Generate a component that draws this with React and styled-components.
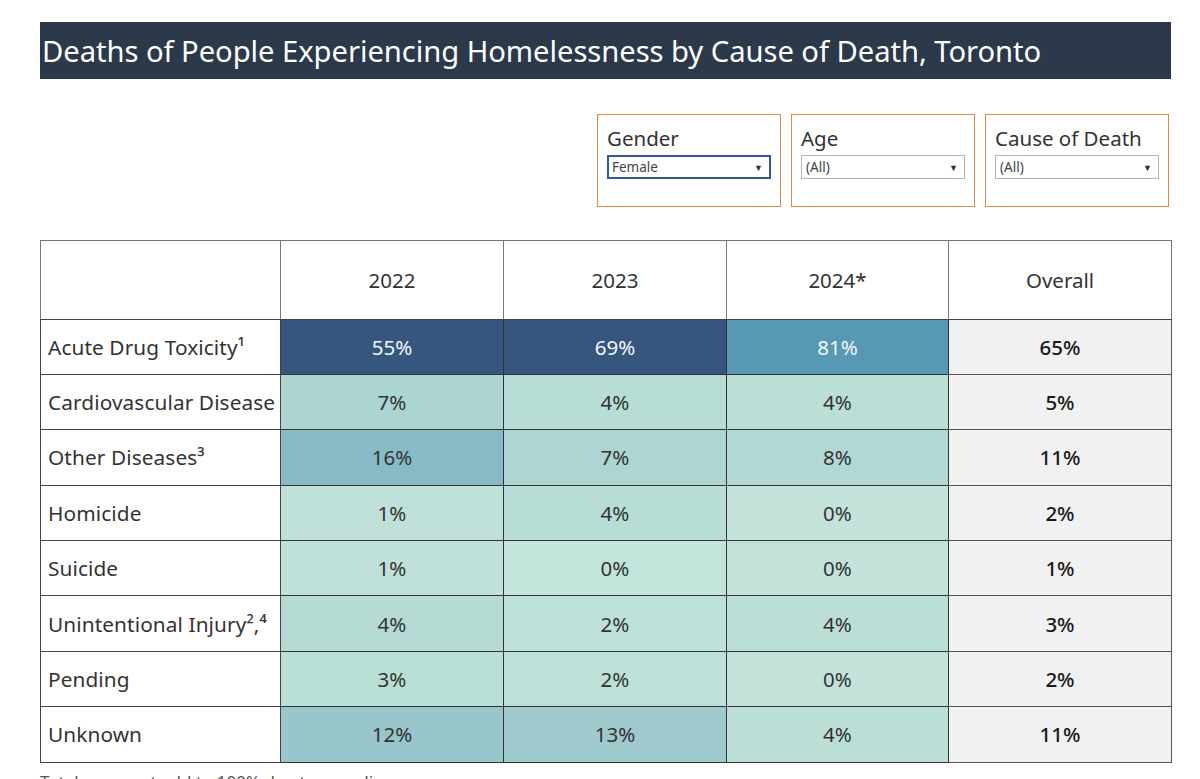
import React from "react";
import styled, { createGlobalStyle } from "styled-components";

const GlobalStyle = createGlobalStyle`
    html, body {
        margin: 0;
        padding: 0;
        background: #ffffff;
        font-family: "Noto Sans", "Open Sans", sans-serif;
        height: 779px;
        overflow: hidden;
    }
`;

const Page = styled.div`
    width: 1131px;
    padding: 22px 0 0 40px;
`;

const TitleBar = styled.header`
    background: #2b394b;
    height: 57px;
    display: flex;
    align-items: center;
    padding-left: 2px;

    h1 {
        margin: 0;
        color: #ffffff;
        font-size: 29.2px;
        font-weight: 400;
        letter-spacing: -0.05px;
    }
`;

const FilterRow = styled.div`
    display: flex;
    justify-content: flex-end;
    gap: 10px;
    margin-top: 35px;
    padding-right: 2px;
`;

const FilterBox = styled.div`
    width: 184px;
    height: 93px;
    border: 1.5px solid #e08b40;
    padding: 10px 9px 0 9px;
    box-sizing: border-box;

    label {
        display: block;
        font-size: 20.5px;
        color: #333;
        line-height: 26px;
        margin-bottom: 4px;
    }
`;

const Select = styled.div`
    height: 24px;
    box-sizing: border-box;
    border: ${({ focused }) => (focused ? "2px solid #2d5a96" : "1px solid #b4b4b4")};
    display: flex;
    align-items: center;
    justify-content: space-between;
    padding: 0 6px 0 ${({ focused }) => (focused ? "3px" : "4px")};
    font-size: 13.5px;
    color: #444;

    span.arrow {
        font-size: 9px;
        color: #333;
    }
`;

const Table = styled.table`
    margin-top: 33px;
    border-collapse: collapse;
    width: 1131px;
    table-layout: fixed;
    color: #333;
`;

const HeadCell = styled.th`
    height: 75.5px;
    border: 1px solid #777;
    border-bottom: 1.5px solid #444;
    font-size: 20.5px;
    font-weight: 400;
    text-align: center;
    color: #333;
`;

const LabelCell = styled.td`
    height: 54.4px;
    border: 1px solid #444;
    font-size: 20.8px;
    padding: 0 0 0 7px;
    white-space: nowrap;
    overflow: hidden;
    color: #333;
    letter-spacing: 0.1px;
`;

const ValueCell = styled.td`
    border: 1px solid #333;
    background: ${({ bg }) => bg};
    color: ${({ dark }) => (dark ? "#f4f7fa" : "#333")};
    font-size: 20.5px;
    text-align: center;
`;

const TotalCell = styled.td`
    border: 1px solid #555;
    background: #f1f1f1;
    color: #1a1a1a;
    font-size: 20.5px;
    font-weight: 500;
    text-align: center;
`;

const Footnote = styled.p`
    margin: 7px 0 0 0;
    font-size: 17px;
    color: #555;
`;

const rows = [
    { label: "Acute Drug Toxicity¹", cells: [["55%", "#36567f", 1], ["69%", "#36567f", 1], ["81%", "#5799b3", 1]], total: "65%" },
    { label: "Cardiovascular Disease", cells: [["7%", "#acd5d1"], ["4%", "#b8dcd6"], ["4%", "#bbdfd7"]], total: "5%" },
    { label: "Other Diseases³", cells: [["16%", "#88bbc6"], ["7%", "#add5d1"], ["8%", "#b1d8d2"]], total: "11%" },
    { label: "Homicide", cells: [["1%", "#bfe1d9"], ["4%", "#b8dcd6"], ["0%", "#c3e3da"]], total: "2%" },
    { label: "Suicide", cells: [["1%", "#bfe1d9"], ["0%", "#c3e4da"], ["0%", "#c3e3da"]], total: "1%" },
    { label: "Unintentional Injury²,⁴", cells: [["4%", "#b6dbd5"], ["2%", "#bde0d8"], ["4%", "#bbdfd7"]], total: "3%" },
    { label: "Pending", cells: [["3%", "#badfd7"], ["2%", "#bde0d8"], ["0%", "#c3e3da"]], total: "2%" },
    { label: "Unknown", cells: [["12%", "#98c6cb"], ["13%", "#9fcacd"], ["4%", "#bbdfd7"]], total: "11%" },
];

const filters = [
    { name: "Gender", value: "Female", focused: true },
    { name: "Age", value: "(All)" },
    { name: "Cause of Death", value: "(All)" },
];

const App = () => {
    return (
        <Page>
            <GlobalStyle />
            <TitleBar>
                <h1>Deaths of People Experiencing Homelessness by Cause of Death, Toronto</h1>
            </TitleBar>

            <FilterRow>
                {filters.map((f) => (
                    <FilterBox key={f.name}>
                        <label>{f.name}</label>
                        <Select focused={f.focused}>
                            <span>{f.value}</span>
                            <span className="arrow">▼</span>
                        </Select>
                    </FilterBox>
                ))}
            </FilterRow>

            <Table>
                <colgroup>
                    <col style={{ width: 240 }} />
                    <col style={{ width: 223 }} />
                    <col style={{ width: 223 }} />
                    <col style={{ width: 222 }} />
                    <col style={{ width: 223 }} />
                </colgroup>
                <thead>
                    <tr>
                        <HeadCell />
                        <HeadCell>2022</HeadCell>
                        <HeadCell>2023</HeadCell>
                        <HeadCell>2024*</HeadCell>
                        <HeadCell>Overall</HeadCell>
                    </tr>
                </thead>
                <tbody>
                    {rows.map((r) => (
                        <tr key={r.label}>
                            <LabelCell>{r.label}</LabelCell>
                            {r.cells.map(([v, bg, dark], i) => (
                                <ValueCell key={i} bg={bg} dark={dark}>
                                    {v}
                                </ValueCell>
                            ))}
                            <TotalCell>{r.total}</TotalCell>
                        </tr>
                    ))}
                </tbody>
            </Table>
            <Footnote>Totals may not add to 100% due to rounding.</Footnote>
        </Page>
    );
};

export default App;
